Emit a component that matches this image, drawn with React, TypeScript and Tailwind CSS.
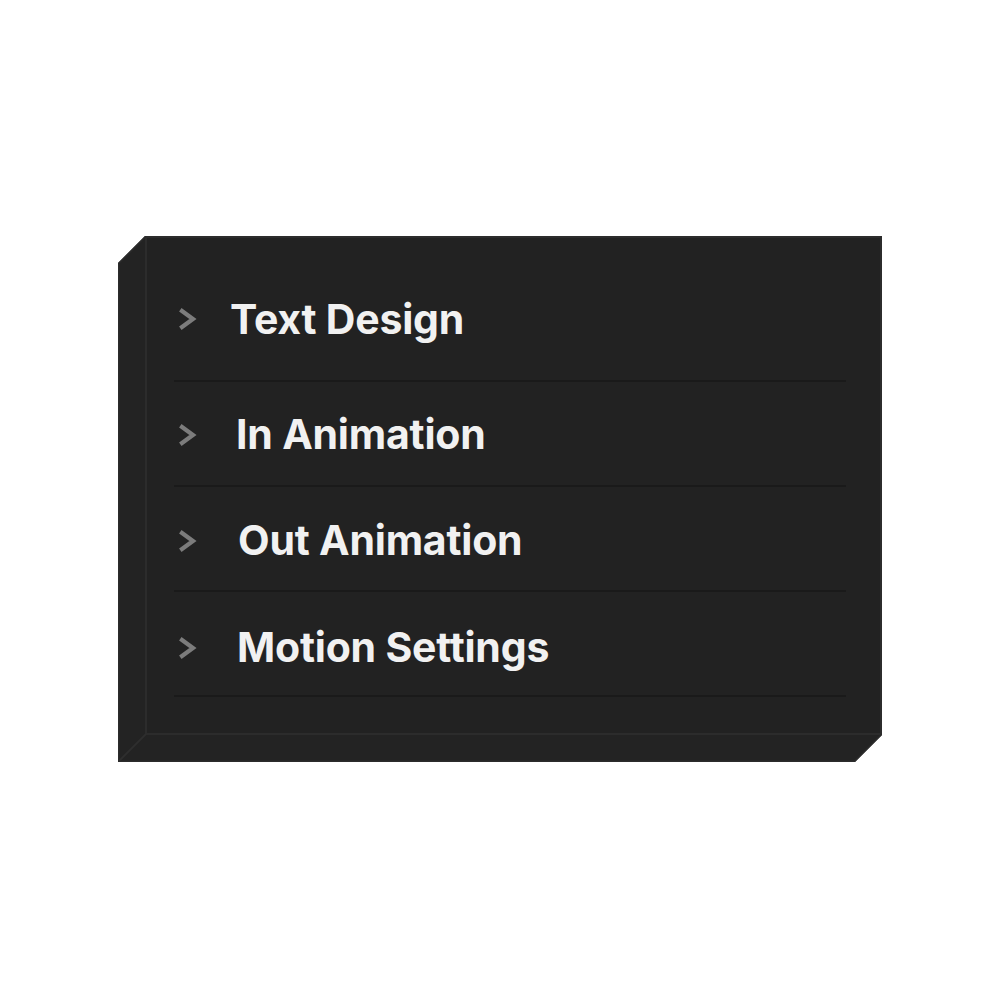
interface ISectionRow {
  label: string;
  textOffset: string;
  rowClass: string;
}

const rows: ISectionRow[] = [
  { label: "Text Design", textOffset: "ml-[31px]", rowClass: "h-[144px] pt-[20px]" },
  { label: "In Animation", textOffset: "ml-[37px]", rowClass: "h-[105px] pt-[2px]" },
  { label: "Out Animation", textOffset: "ml-[39px]", rowClass: "h-[105px] pt-[4px]" },
  { label: "Motion Settings", textOffset: "ml-[38px]", rowClass: "h-[105px] pt-[8px]" },
];

const Chevron = () => (
  <svg
    width="20"
    height="22"
    viewBox="0 0 20 22"
    fill="none"
    className="shrink-0"
  >
    <polyline
      points="3,3 14,11 3,19"
      stroke="#7c7c7c"
      strokeWidth="4.2"
      strokeLinecap="square"
      strokeLinejoin="miter"
    />
  </svg>
);

const SectionRow = (props: ISectionRow) => {
  const { label, textOffset, rowClass } = props;
  return (
    <div
      className={`flex items-center border-b-2 border-[#1a1a1a] pl-[5px] ${rowClass}`}
    >
      <Chevron />
      <p
        className={`${textOffset} text-[41px] font-bold leading-none tracking-[-0.005em] text-[#f1f1f1]`}
      >
        {label}
      </p>
    </div>
  );
};

export default function App() {
  return (
    <div
      className="w-[1000px] h-[1000px] bg-white pt-[236px] pl-[118px]"
      style={{ fontFamily: "Inter, 'Noto Sans', sans-serif" }}
    >
      {/* extruded box: depth to the left and bottom, corners cut with clip-path */}
      <div className="relative w-[764px] h-[526px] bg-[#232323] pl-[27px] pb-[27px] [clip-path:polygon(27px_0,100%_0,100%_calc(100%-27px),calc(100%-27px)_100%,0_100%,0_27px)]">
        <div className="h-full box-border border-2 border-[#2c2c2c] bg-[#222222] pl-[27px] pr-[34px]">
          {rows.map((row) => (
            <SectionRow key={row.label} {...row} />
          ))}
        </div>
        <svg
          className="absolute inset-0 pointer-events-none"
          width="764"
          height="526"
          viewBox="0 0 764 526"
          fill="none"
        >
          <polygon
            points="27,0 764,0 764,499 737,526 0,526 0,27"
            stroke="#2c2c2c"
            strokeWidth="3"
          />
          <line x1="1" y1="525" x2="28" y2="498" stroke="#2e2e2e" strokeWidth="2" />
        </svg>
      </div>
    </div>
  );
}
